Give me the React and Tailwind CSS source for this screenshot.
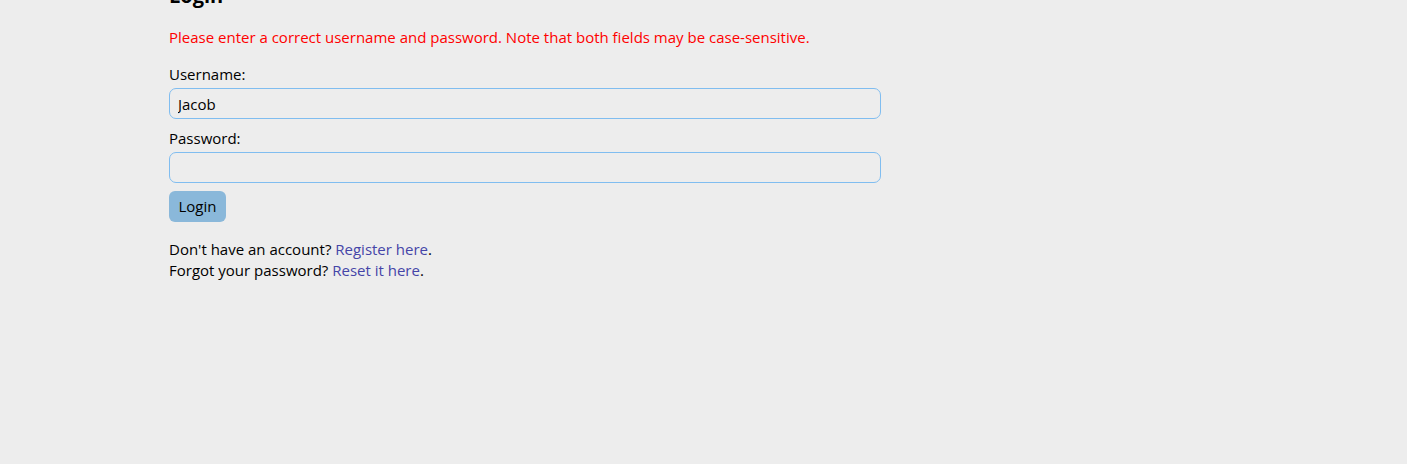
import React from 'react';

const App = () => {
  return (
    <div className="h-[464px] w-full overflow-hidden bg-[#ededed] text-black font-['Open_Sans',sans-serif] text-[15px]">
      <div className="ml-[169px] w-[712px] -mt-[17px]">
        <h2 className="text-[20px] font-bold leading-[26px] h-[22px]">Login</h2>
        <p className="mt-[22px] text-[#ff0000] leading-[20px]">
          Please enter a correct username and password. Note that both fields may be case-sensitive.
        </p>
        <form className="mt-[17px] flex flex-col" onSubmit={(e) => e.preventDefault()}>
          <label className="leading-[20px]">Username:</label>
          <input
            type="text"
            defaultValue="Jacob"
            className="mt-[4px] h-[31px] w-full rounded-[7px] border border-[#80bdf0] bg-transparent px-[8px] outline-none"
          />
          <label className="mt-[9px] leading-[20px]">Password:</label>
          <input
            type="password"
            className="mt-[4px] h-[31px] w-full rounded-[7px] border border-[#80bdf0] bg-transparent px-[8px] outline-none"
          />
          <div className="mt-[8px]">
            <button className="h-[31px] w-[57px] rounded-[6px] bg-[#8ab8da] text-black">Login</button>
          </div>
        </form>
        <div className="mt-[17px] leading-[21px]">
          <p>
            Don't have an account? <a href="#" className="text-[#4545a8]">Register here</a>.
          </p>
          <p>
            Forgot your password? <a href="#" className="text-[#4545a8]">Reset it here</a>.
          </p>
        </div>
      </div>
    </div>
  );
};

export default App;
